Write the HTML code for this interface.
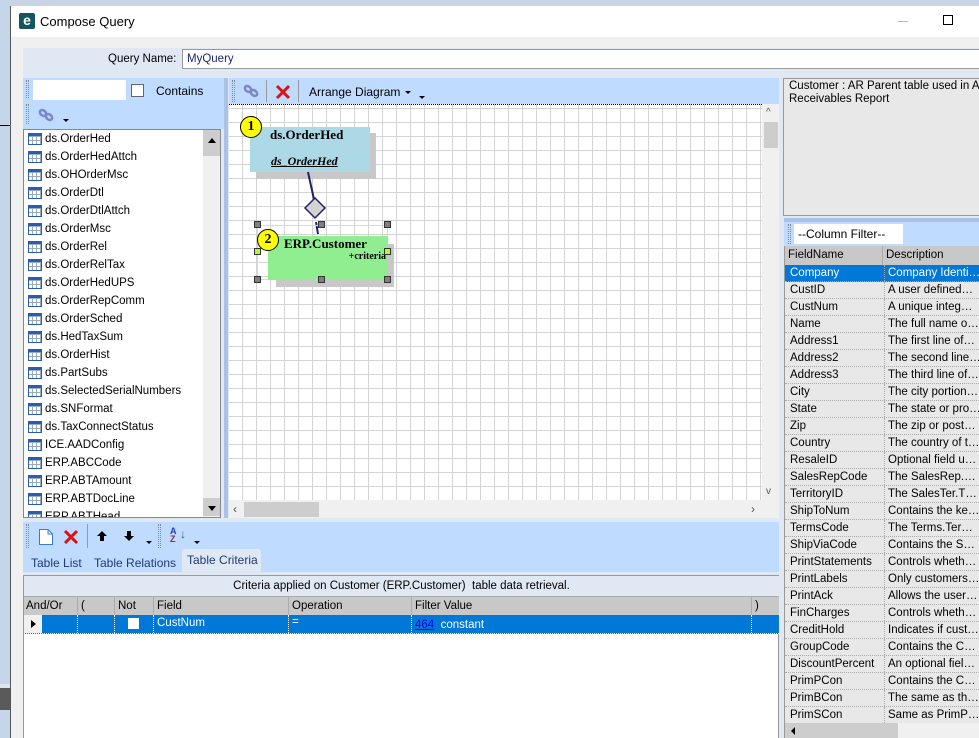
<!DOCTYPE html>
<html><head><meta charset="utf-8"><style>
*{box-sizing:border-box;margin:0;padding:0}
body{width:979px;height:738px;overflow:hidden;position:relative;background:#f0f0f0;font-family:"Liberation Sans",sans-serif;font-size:12px;color:#000}
.a{position:absolute;white-space:nowrap}
.ti{position:absolute;left:4px;width:14px;height:12px;border:1px solid #2a5db0;background:#fff;
background-image:linear-gradient(#2a5db0,#2a5db0),repeating-linear-gradient(90deg,transparent 0 3px,#9ab 3px 4px),repeating-linear-gradient(0deg,transparent 0 3px,#9ab 3px 4px);background-size:100% 2px,100% 100%,100% 100%;background-repeat:no-repeat,repeat,repeat}
.li{position:absolute;left:0;height:18px;width:180px;font-size:11.5px;line-height:18px}
.li span{position:absolute;left:21px}
.rr{position:absolute;left:0;width:196px;height:17px;border-bottom:1px dotted #aaa;font-size:11.5px;line-height:16px}
.rr .f{position:absolute;left:5px}
.rr .d{position:absolute;left:99px;width:97px;overflow:hidden;white-space:nowrap;border-left:1px dotted #aaa;padding-left:3px;height:16px}
.grip{position:absolute;width:3px;border-left:1px dotted #888;border-right:1px dotted #888}
</style></head><body>
<div class="a" style="left:0;top:0;width:979px;height:7px;background:#c8d5e6"></div>
<div class="a" style="left:0;top:0;width:10px;height:738px;background:#c5d5ea"></div>
<div class="a" style="left:0;top:125px;width:10px;height:1px;background:#000"></div>
<div class="a" style="left:0;top:688px;width:10px;height:22px;background:#5a5a5a"></div>
<div class="a" style="left:0;top:684px;width:10px;height:4px;background:#dde5f0"></div>
<div class="a" style="left:10px;top:6px;width:1px;height:732px;background:#555"></div>
<div class="a" style="left:11px;top:6px;width:968px;height:31px;background:#fff"></div>
<div class="a" style="left:19px;top:13px;width:16px;height:16px;background:#14555f;border-radius:2px;color:#fff;font-weight:bold;font-size:14px;line-height:15px;text-align:center">e</div>
<div class="a" style="left:40px;top:14px;font-size:13px">Compose Query</div>
<div class="a" style="left:898px;top:21px;width:10px;height:1px;background:#bbb"></div>
<div class="a" style="left:943px;top:15px;width:10px;height:10px;border:1px solid #000"></div>
<div class="a" style="left:23px;top:48px;width:956px;height:690px;background:#dfe8f3"></div>
<div class="a" style="left:108px;top:53px;font-size:11.5px">Query Name:</div>
<div class="a" style="left:182px;top:49px;width:797px;height:20px;background:#fff;border:1px solid #999;border-right:none;font-size:11.5px;color:#1a2a6a;padding:3px 4px">MyQuery</div>
<div class="a" style="left:23px;top:78px;width:202px;height:51px;background:#bfdbff"></div>
<div class="grip" style="left:26px;top:80px;height:18px"></div>
<div class="grip" style="left:26px;top:104px;height:20px"></div>
<div class="a" style="left:33px;top:80px;width:93px;height:20px;background:#fff"></div>
<div class="a" style="left:131px;top:84px;width:13px;height:13px;background:#fff;border:1px solid #666"></div>
<div class="a" style="left:156px;top:84px;font-size:12px">Contains</div>
<div class="a" style="left:38px;top:108px;width:16px;height:14px"><svg width="16" height="14"><g stroke="#7c86c8" stroke-width="2.5" fill="none"><ellipse cx="5" cy="5" rx="3.5" ry="2.5" transform="rotate(40 5 5)"/><ellipse cx="11" cy="9" rx="3.5" ry="2.5" transform="rotate(40 11 9)"/></g></svg></div>
<div class="a" style="left:63px;top:119px;width:0;height:0;border:3px solid transparent;border-top:3px solid #000"></div>
<div class="a" style="left:23px;top:129px;width:198px;height:389px;background:#fff;border:1px solid #888;overflow:hidden">
<div style="position:absolute;left:0;top:0">
<div class="li" style="top:0"><i class="ti" style="top:3px"></i><span>ds.OrderHed</span></div>
<div class="li" style="top:18px"><i class="ti" style="top:3px"></i><span>ds.OrderHedAttch</span></div>
<div class="li" style="top:36px"><i class="ti" style="top:3px"></i><span>ds.OHOrderMsc</span></div>
<div class="li" style="top:54px"><i class="ti" style="top:3px"></i><span>ds.OrderDtl</span></div>
<div class="li" style="top:72px"><i class="ti" style="top:3px"></i><span>ds.OrderDtlAttch</span></div>
<div class="li" style="top:90px"><i class="ti" style="top:3px"></i><span>ds.OrderMsc</span></div>
<div class="li" style="top:108px"><i class="ti" style="top:3px"></i><span>ds.OrderRel</span></div>
<div class="li" style="top:126px"><i class="ti" style="top:3px"></i><span>ds.OrderRelTax</span></div>
<div class="li" style="top:144px"><i class="ti" style="top:3px"></i><span>ds.OrderHedUPS</span></div>
<div class="li" style="top:162px"><i class="ti" style="top:3px"></i><span>ds.OrderRepComm</span></div>
<div class="li" style="top:180px"><i class="ti" style="top:3px"></i><span>ds.OrderSched</span></div>
<div class="li" style="top:198px"><i class="ti" style="top:3px"></i><span>ds.HedTaxSum</span></div>
<div class="li" style="top:216px"><i class="ti" style="top:3px"></i><span>ds.OrderHist</span></div>
<div class="li" style="top:234px"><i class="ti" style="top:3px"></i><span>ds.PartSubs</span></div>
<div class="li" style="top:252px"><i class="ti" style="top:3px"></i><span>ds.SelectedSerialNumbers</span></div>
<div class="li" style="top:270px"><i class="ti" style="top:3px"></i><span>ds.SNFormat</span></div>
<div class="li" style="top:288px"><i class="ti" style="top:3px"></i><span>ds.TaxConnectStatus</span></div>
<div class="li" style="top:306px"><i class="ti" style="top:3px"></i><span>ICE.AADConfig</span></div>
<div class="li" style="top:324px"><i class="ti" style="top:3px"></i><span>ERP.ABCCode</span></div>
<div class="li" style="top:342px"><i class="ti" style="top:3px"></i><span>ERP.ABTAmount</span></div>
<div class="li" style="top:360px"><i class="ti" style="top:3px"></i><span>ERP.ABTDocLine</span></div>
<div class="li" style="top:378px"><i class="ti" style="top:3px"></i><span>ERP.ABTHead</span></div>
</div>
<div style="position:absolute;left:179px;top:0;width:18px;height:389px;background:#f0f0f0">
<div style="position:absolute;left:0;top:0;width:17px;height:26px;background:#cdcdcd"></div>
<div style="position:absolute;left:5px;top:8px;border:4px solid transparent;border-bottom:5px solid #000;border-top:none"></div>
<div style="position:absolute;left:0;top:368px;width:17px;height:18px;background:#cdcdcd"></div>
<div style="position:absolute;left:5px;top:376px;border:4px solid transparent;border-top:5px solid #000;border-bottom:none"></div>
</div>
</div>
<div class="a" style="left:224px;top:78px;width:4px;height:440px;background:#a9c2e6"></div>
<div class="a" style="left:229px;top:78px;width:550px;height:26px;background:#bfdbff"></div>
<div class="grip" style="left:232px;top:80px;height:22px"></div>
<div class="a" style="left:243px;top:84px"><svg width="16" height="14"><g stroke="#7c86c8" stroke-width="2.5" fill="none"><ellipse cx="5" cy="5" rx="3.5" ry="2.5" transform="rotate(40 5 5)"/><ellipse cx="11" cy="9" rx="3.5" ry="2.5" transform="rotate(40 11 9)"/></g></svg></div>
<div class="a" style="left:266px;top:80px;width:1px;height:22px;background:#999"></div>
<div class="a" style="left:275px;top:84px"><svg width="16" height="16"><path d="M2 2L14 14M14 2L2 14" stroke="#e01010" stroke-width="3"/></svg></div>
<div class="a" style="left:298px;top:80px;width:1px;height:22px;background:#999"></div>
<div class="a" style="left:309px;top:85px;font-size:12px">Arrange Diagram</div>
<div class="a" style="left:405px;top:91px;border:3px solid transparent;border-top:3px solid #000"></div>
<div class="a" style="left:419px;top:96px;border:3px solid transparent;border-top:3px solid #000"></div>
<div class="a" style="left:229px;top:104px;width:533px;height:396px;background-color:#fff;border-top:1px dotted #000;background-image:repeating-linear-gradient(90deg,transparent 0 13px,#d4d4d4 13px 14px),repeating-linear-gradient(0deg,transparent 0 13px,#d4d4d4 13px 14px)"></div>
<div class="a" style="left:762px;top:104px;width:17px;height:396px;background:#f0f0f0"></div>
<div class="a" style="left:764px;top:122px;width:14px;height:26px;background:#cdcdcd"></div>
<div class="a" style="left:766px;top:107px;font-size:10px;color:#555">^</div>
<div class="a" style="left:766px;top:486px;font-size:10px;color:#555">v</div>
<div class="a" style="left:229px;top:500px;width:550px;height:18px;background:#f0f0f0"></div>
<div class="a" style="left:244px;top:502px;width:75px;height:15px;background:#cdcdcd"></div>
<div class="a" style="left:233px;top:502px;font-size:12px;color:#555">‹</div>
<div class="a" style="left:751px;top:502px;font-size:12px;color:#555">›</div>
<div class="a" style="left:256px;top:133px;width:120px;height:46px;background:#c8c8c8"></div>
<div class="a" style="left:250px;top:127px;width:120px;height:45px;background:#add8e6;font-family:'Liberation Serif',serif;font-weight:bold;font-size:13px"><div style="position:absolute;left:20px;top:0">ds.OrderHed</div><div style="position:absolute;left:21px;top:27px;font-style:italic;font-size:12px;text-decoration:underline">ds_OrderHed</div></div>
<div class="a" style="left:240px;top:116px;width:22px;height:22px;border-radius:50%;background:#ff0;border:1px solid #000;font-family:'Liberation Serif',serif;font-weight:bold;font-size:14px;text-align:center;line-height:20px">1</div>
<svg class="a" style="left:229px;top:104px" width="200" height="200"><path d="M79 68L86 100M87 118L89 130" stroke="#22226a" stroke-width="2"/><path d="M86 94L96 104L86 114L76 104Z" fill="#d3d3d3" stroke="#22226a" stroke-width="1.5"/></svg>
<div class="a" style="left:276px;top:244px;width:118px;height:43px;background:#c8c8c8"></div>
<div class="a" style="left:257px;top:225px;width:131px;height:55px;border:1px solid #c8f090"></div>
<div class="a" style="left:268px;top:236px;width:120px;height:44px;background:#90ee90;font-family:'Liberation Serif',serif"><div style="position:absolute;left:16px;top:0;font-weight:bold;font-size:13px">ERP.Customer</div><div style="position:absolute;right:2px;top:15px;font-weight:bold;font-size:10px">+criteria</div></div>
<div class="a" style="left:257px;top:229px;width:22px;height:22px;border-radius:50%;background:#ff0;border:1px solid #000;font-family:'Liberation Serif',serif;font-weight:bold;font-size:14px;text-align:center;line-height:20px">2</div>
<div class="a" style="left:254px;top:221px;width:7px;height:7px;background:#808080;border:1px solid #333"></div>
<div class="a" style="left:318px;top:221px;width:7px;height:7px;background:#808080;border:1px solid #333"></div>
<div class="a" style="left:384px;top:221px;width:7px;height:7px;background:#808080;border:1px solid #333"></div>
<div class="a" style="left:254px;top:248px;width:7px;height:7px;background:#adff2f;border:1px solid #333"></div>
<div class="a" style="left:384px;top:248px;width:7px;height:7px;background:#adff2f;border:1px solid #333"></div>
<div class="a" style="left:254px;top:276px;width:7px;height:7px;background:#808080;border:1px solid #333"></div>
<div class="a" style="left:318px;top:276px;width:7px;height:7px;background:#808080;border:1px solid #333"></div>
<div class="a" style="left:384px;top:276px;width:7px;height:7px;background:#808080;border:1px solid #333"></div>
<div class="a" style="left:783px;top:78px;width:196px;height:138px;background:#e8e8e8;border:1px solid #999;border-right:none;padding:1px 5px;font-size:11.5px;line-height:13px;white-space:nowrap;overflow:hidden">Customer : AR Parent table used in Aged<br>Receivables Report</div>
<div class="a" style="left:784px;top:218px;width:195px;height:4px;background:#a9c2e6"></div>
<div class="a" style="left:784px;top:222px;width:195px;height:24px;background:#bfdbff"></div>
<div class="grip" style="left:788px;top:224px;height:20px"></div>
<div class="a" style="left:794px;top:224px;width:109px;height:20px;background:#fff;font-size:12px;padding:3px 4px">--Column Filter--</div>
<div class="a" style="left:784px;top:246px;width:195px;height:492px;background:#e8e8e8;border-left:1px solid #999;overflow:hidden">
<div style="position:absolute;left:0;top:0;width:196px;height:19px;background:#c8c8c8;font-size:11.5px;line-height:19px"><span style="position:absolute;left:3px">FieldName</span><span style="position:absolute;left:97px;border-left:1px solid #aaa;padding-left:3px;height:19px">Description</span></div>
<div style="position:absolute;left:0;top:19px;width:196px">
<div class="rr" style="top:0;background:#0078d7;color:#fff"><span class="f">Company</span><span class="d">Company Identi…</span></div>
<div class="rr" style="top:17px"><span class="f">CustID</span><span class="d">A user defined…</span></div>
<div class="rr" style="top:34px"><span class="f">CustNum</span><span class="d">A unique integ…</span></div>
<div class="rr" style="top:51px"><span class="f">Name</span><span class="d">The full name o…</span></div>
<div class="rr" style="top:68px"><span class="f">Address1</span><span class="d">The first line of…</span></div>
<div class="rr" style="top:85px"><span class="f">Address2</span><span class="d">The second line…</span></div>
<div class="rr" style="top:102px"><span class="f">Address3</span><span class="d">The third line of…</span></div>
<div class="rr" style="top:119px"><span class="f">City</span><span class="d">The city portion…</span></div>
<div class="rr" style="top:136px"><span class="f">State</span><span class="d">The state or pro…</span></div>
<div class="rr" style="top:153px"><span class="f">Zip</span><span class="d">The zip or post…</span></div>
<div class="rr" style="top:170px"><span class="f">Country</span><span class="d">The country of t…</span></div>
<div class="rr" style="top:187px"><span class="f">ResaleID</span><span class="d">Optional field u…</span></div>
<div class="rr" style="top:204px"><span class="f">SalesRepCode</span><span class="d">The SalesRep.…</span></div>
<div class="rr" style="top:221px"><span class="f">TerritoryID</span><span class="d">The SalesTer.T…</span></div>
<div class="rr" style="top:238px"><span class="f">ShipToNum</span><span class="d">Contains the ke…</span></div>
<div class="rr" style="top:255px"><span class="f">TermsCode</span><span class="d">The Terms.Ter…</span></div>
<div class="rr" style="top:272px"><span class="f">ShipViaCode</span><span class="d">Contains the S…</span></div>
<div class="rr" style="top:289px"><span class="f">PrintStatements</span><span class="d">Controls wheth…</span></div>
<div class="rr" style="top:306px"><span class="f">PrintLabels</span><span class="d">Only customers…</span></div>
<div class="rr" style="top:323px"><span class="f">PrintAck</span><span class="d">Allows the user…</span></div>
<div class="rr" style="top:340px"><span class="f">FinCharges</span><span class="d">Controls wheth…</span></div>
<div class="rr" style="top:357px"><span class="f">CreditHold</span><span class="d">Indicates if cust…</span></div>
<div class="rr" style="top:374px"><span class="f">GroupCode</span><span class="d">Contains the C…</span></div>
<div class="rr" style="top:391px"><span class="f">DiscountPercent</span><span class="d">An optional fiel…</span></div>
<div class="rr" style="top:408px"><span class="f">PrimPCon</span><span class="d">Contains the C…</span></div>
<div class="rr" style="top:425px"><span class="f">PrimBCon</span><span class="d">The same as th…</span></div>
<div class="rr" style="top:442px"><span class="f">PrimSCon</span><span class="d">Same as PrimP…</span></div>
</div>
<div style="position:absolute;left:0;top:477px;width:196px;height:15px;background:#f0f0f0"><div style="position:absolute;left:0;top:0;width:113px;height:15px;background:#cdcdcd"></div><div style="position:absolute;left:6px;top:4px;border:4px solid transparent;border-right:4px solid #000;border-left:none"></div></div>
</div>
<div class="a" style="left:23px;top:522px;width:756px;height:50px;background:#bfdbff"></div>
<div class="grip" style="left:26px;top:524px;height:24px"></div>
<div class="a" style="left:38px;top:528px"><svg width="16" height="18"><path d="M1.5 1.5H10L14.5 6V16.5H1.5Z" fill="#fff" stroke="#3a7bd5"/><path d="M10 1.5V6H14.5" fill="none" stroke="#3a7bd5"/></svg></div>
<div class="a" style="left:63px;top:529px"><svg width="16" height="16"><path d="M2 2L14 14M14 2L2 14" stroke="#e01010" stroke-width="3"/></svg></div>
<div class="a" style="left:87px;top:524px;width:1px;height:24px;background:#999"></div>
<div class="a" style="left:97px;top:530px"><svg width="10" height="10"><path d="M5 0L10 5H7V10H3V5H0Z" fill="#000"/></svg></div>
<div class="a" style="left:124px;top:530px"><svg width="10" height="10"><path d="M5 10L10 5H7V0H3V5H0Z" fill="#000"/></svg></div>
<div class="a" style="left:146px;top:541px;border:3px solid transparent;border-top:3px solid #000"></div>
<div class="grip" style="left:158px;top:524px;height:24px"></div>
<div class="a" style="left:170px;top:527px;font-size:9px;font-weight:bold;line-height:8px;color:#2040c0">A<br><span style="color:#a0204a">Z</span></div>
<div class="a" style="left:180px;top:527px;font-size:12px;color:#555">↓</div>
<div class="a" style="left:194px;top:541px;border:3px solid transparent;border-top:3px solid #000"></div>
<div class="a" style="left:31px;top:556px;font-size:12px;color:#1e3a78">Table List</div>
<div class="a" style="left:94px;top:556px;font-size:12px;color:#1e3a78">Table Relations</div>
<div class="a" style="left:182px;top:549px;width:79px;height:23px;background:#dfe8f3;border-radius:3px 3px 0 0;font-size:12px;color:#1e3a78;padding:4px 5px;white-space:nowrap">Table Criteria</div>
<div class="a" style="left:23px;top:575px;width:756px;height:163px;background:#fff;border:1px solid #999;border-bottom:none"></div>
<div class="a" style="left:24px;top:576px;width:755px;height:20px;background:#dfe8f3;font-size:11.5px;line-height:20px;text-align:center">Criteria applied on Customer (ERP.Customer)&nbsp; table data retrieval.</div>
<div class="a" style="left:24px;top:596px;width:755px;height:19px;background:#c8c8c8;font-size:11.5px;line-height:19px;border-top:1px solid #aaa">
<span style="position:absolute;left:2px">And/Or</span>
<span style="position:absolute;left:53px;border-left:1px solid #aaa;padding-left:3px;height:18px">(</span>
<span style="position:absolute;left:90px;border-left:1px solid #aaa;padding-left:3px;height:18px">Not</span>
<span style="position:absolute;left:129px;border-left:1px solid #aaa;padding-left:3px;height:18px">Field</span>
<span style="position:absolute;left:264px;border-left:1px solid #aaa;padding-left:3px;height:18px">Operation</span>
<span style="position:absolute;left:387px;border-left:1px solid #aaa;padding-left:3px;height:18px">Filter Value</span>
<span style="position:absolute;left:727px;border-left:1px solid #aaa;padding-left:3px;height:18px;width:28px">)</span>
</div>
<div class="a" style="left:24px;top:615px;width:755px;height:19px;background:#0078d7;color:#fff;font-size:11.5px;line-height:18px;border-bottom:1px dotted #fff">
<span style="position:absolute;left:0;top:0;width:18px;height:18px;background:#f0f0f0"></span>
<span style="position:absolute;left:7px;top:5px;border:4px solid transparent;border-left:5px solid #000;border-right:none"></span>
<span style="position:absolute;left:53px;height:18px;border-left:1px dotted #fff"></span>
<span style="position:absolute;left:90px;height:18px;border-left:1px dotted #fff"></span>
<span style="position:absolute;left:104px;top:3px;width:11px;height:11px;background:#fff"></span>
<span style="position:absolute;left:129px;border-left:1px dotted #fff;padding-left:3px;height:18px;line-height:16px">CustNum</span>
<span style="position:absolute;left:264px;border-left:1px dotted #fff;padding-left:3px;height:18px;line-height:14px">=</span>
<span style="position:absolute;left:387px;border-left:1px dotted #fff;padding-left:3px;height:18px;line-height:20px"><u style="color:#0000ee">464</u>&nbsp; constant</span>
<span style="position:absolute;left:727px;height:18px;border-left:1px dotted #fff"></span>
</div>
</body></html>
